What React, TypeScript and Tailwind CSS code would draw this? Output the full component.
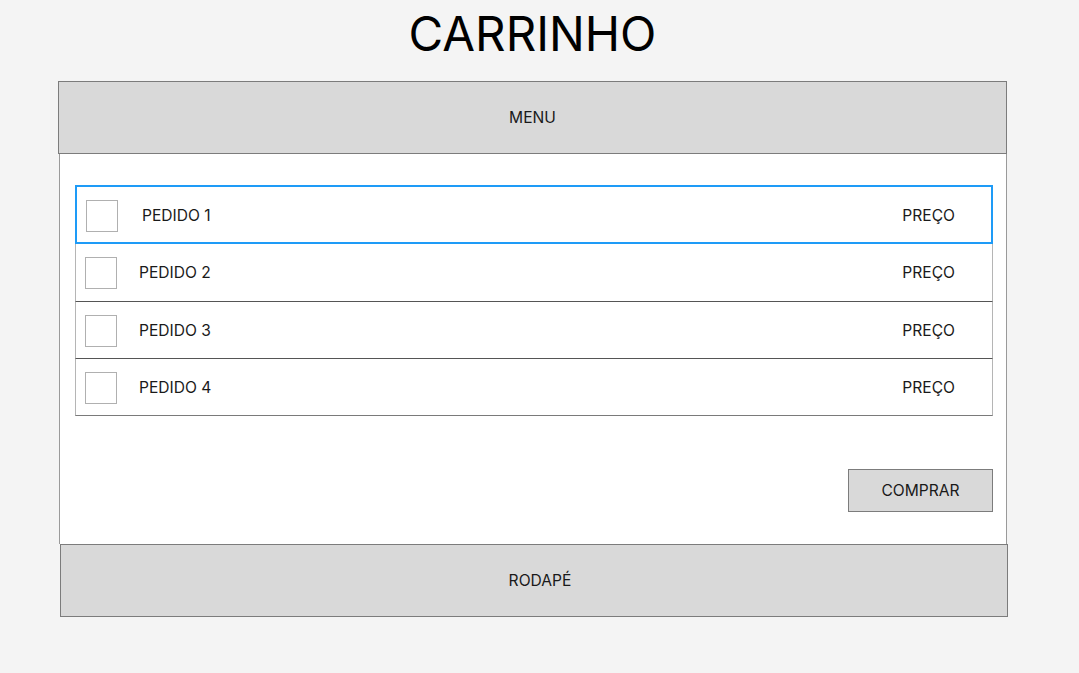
import React from "react";

const pedidos = ["PEDIDO 1", "PEDIDO 2", "PEDIDO 3", "PEDIDO 4"];

export default function App() {
  return (
    <div
      className="min-h-[673px] w-full bg-[#f4f4f4] text-[#1a1a1a]"
      style={{ fontFamily: "Inter, 'Noto Sans', sans-serif" }}
    >
      <h1 className="pt-[6px] pl-[58px] w-[1007px] text-center text-[47.5px] leading-[56px] font-normal text-black">
        CARRINHO
      </h1>

      <div className="ml-[58px] mt-[19px] w-[950px]">
        {/* menu */}
        <div className="flex h-[73px] w-[949px] items-center justify-center border border-[#7c7c7c] bg-[#d9d9d9] pt-[1px] text-[15.6px]">
          MENU
        </div>

        {/* corpo */}
        <div className="ml-[1px] flex h-[390px] w-[948px] flex-col border-x border-[#9a9a9a] bg-white pt-[31px] pl-[15px]">
          <div className="flex w-[918px] flex-col">
            {pedidos.map((p, i) => (
              <div
                key={p}
                className={
                  i === 0
                    ? "flex h-[59px] items-center border-2 border-[#1e9bf7] pt-[2px] pl-[9px] pr-[36px] text-[15.6px]"
                    : i === 1
                      ? "flex h-[58px] items-center border-x border-b border-x-[#b5b5b5] border-b-[#555555] pt-[1px] pl-[9px] pr-[37px] text-[15.6px]"
                      : "flex h-[57px] items-center border-x border-b border-x-[#b5b5b5] border-b-[#555555] pt-[1px] pl-[9px] pr-[37px] text-[15.6px] last:border-b-[#7a7a7a]"
                }
              >
                <div className="h-[32px] w-[32px] border border-[#b0b0b0] bg-white" />
                <span className={i === 0 ? "ml-[24px]" : "ml-[22px]"}>{p}</span>
                <span className="ml-auto">PREÇO</span>
              </div>
            ))}
          </div>

          <div className="mt-[53px] flex w-[918px] justify-end">
            <button className="h-[43px] w-[145px] border border-[#7c7c7c] bg-[#d9d9d9] pt-[1px] text-[15.6px] text-[#1a1a1a]">
              COMPRAR
            </button>
          </div>
        </div>

        {/* rodapé */}
        <div className="ml-[2px] flex h-[73px] w-[948px] items-center justify-center border border-[#7c7c7c] bg-[#d9d9d9] pt-[1px] pl-[12px] text-[15.6px]">
          RODAPÉ
        </div>
      </div>
    </div>
  );
}
